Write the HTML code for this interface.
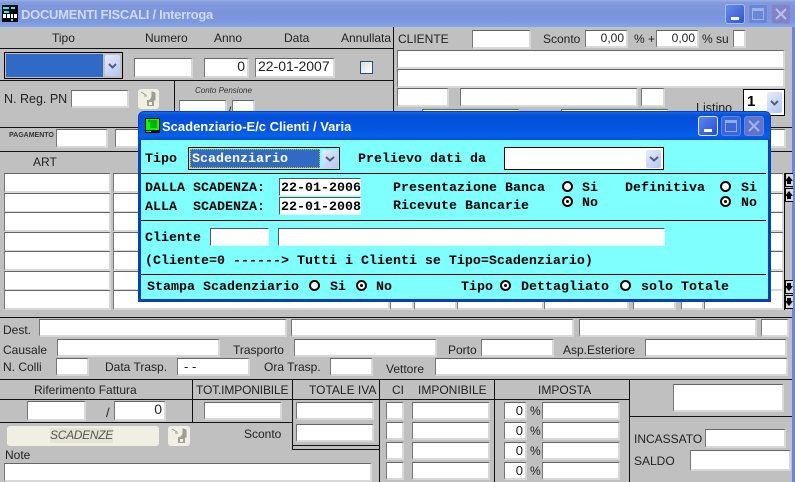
<!DOCTYPE html>
<html><head><meta charset="utf-8">
<style>
html,body{margin:0;padding:0;background:#c0c0c0}
#p{position:relative;width:795px;height:482px;overflow:hidden;background:#c0c0c0;font-family:"Liberation Sans",Arial,sans-serif;font-size:12px;color:#222}
#p div,#p span.a{position:absolute;box-sizing:border-box}
.t{white-space:nowrap;line-height:14px;height:14px}
.c{text-align:center}
.i{background:#fff;border:1px solid #c9c9c9;border-top:1px solid #666;border-left:1px solid #777;border-right:2px solid #d8d8d8;border-bottom:2px solid #d8d8d8;text-align:right;line-height:15px;padding-right:2px;font-size:13px;overflow:hidden;white-space:nowrap}
.k{background:#111}
.btn{background:linear-gradient(135deg,#e6ecfb,#b4c5f0);border-radius:2px}
.btn svg{position:absolute;left:3px;top:8px}
.x{background:#f1efe2;border-radius:3px}
#d{left:138px;top:111px;width:633px;height:191px;background:#0a3fb8;border-radius:6px 6px 0 0}
#d .tt{left:1px;top:1px;width:631px;height:28px;border-radius:5px 5px 0 0;background:linear-gradient(#0f6cf0 0,#0450d6 12%,#0454e0 55%,#0560ea 85%,#0a4fd0 100%)}
#d .b{left:3px;top:29px;width:627px;height:159px;background:#80ffff}
.m{font-family:"Liberation Mono",monospace;font-weight:bold;font-size:13.33px;color:#000;white-space:pre;line-height:14px;height:14px}
.r{width:11px;height:11px;border:2px solid #000;border-radius:50%;background:#fff}
.r.o::after{content:"";position:absolute;left:2px;top:2px;width:3px;height:3px;background:#000;border-radius:50%}
.wb{width:20px;height:20px;border-radius:3px;border:1px solid #fff}
.wb svg{position:absolute;left:2px;top:2px}
.sb{left:785px;width:8px;height:14px;background:#d8d8d8;border:1px solid #000;border-right:0}
.sb svg{position:absolute;left:-1px;top:1px}
</style></head><body><div id="p">

<!-- main title bar -->
<div style="left:0;top:0;width:795px;height:27px;background:linear-gradient(#9db0e6 0,#8299dd 10%,#7a94da 50%,#7c98df 80%,#88a8ea 100%)"></div>
<svg style="position:absolute;left:2px;top:5px" width="16" height="17" viewBox="0 0 16 17"><rect width="16" height="17" fill="#000"/><rect x="1" y="2" width="6" height="2" fill="#0ff"/><rect x="9" y="2" width="4" height="2" fill="#0ff"/><rect x="2" y="6" width="5" height="2" fill="#0ff"/><rect x="1" y="9" width="3" height="4" fill="#fff"/><rect x="5" y="9" width="3" height="4" fill="#fff"/><rect x="9" y="9" width="2" height="4" fill="#fff"/><rect x="12" y="9" width="3" height="4" fill="#fff"/><rect x="9" y="14" width="2" height="2" fill="#0ff"/></svg>
<div class="t" style="left:21px;top:8px;font-size:13px;font-weight:bold;color:#cfdaf5;letter-spacing:-.28px">DOCUMENTI FISCALI / Interroga</div>
<div class="wb" style="left:725px;top:4px;background:linear-gradient(135deg,#6a8ce8,#2f56d0);border-color:#a8bdf2"><div style="left:5px;top:12px;width:8px;height:3px;background:#fff"></div></div>
<div class="wb" style="left:748px;top:4px;background:#6b85d8;border-color:#829be2"><div style="left:3px;top:3px;width:12px;height:12px;border:1px solid #a0b3e8;border-top-width:3px"></div></div>
<div class="wb" style="left:771px;top:4px;background:#8083c8;border-color:#8a8fd4"><svg width="14" height="14" viewBox="0 0 14 14"><path d="M2 2 12 12M12 2 2 12" stroke="#b8c2ea" stroke-width="2" fill="none"/></svg></div>
<div style="left:792px;top:27px;width:3px;height:455px;background:#6f83da"></div>

<!-- header labels -->
<div class="t" style="left:52px;top:31px;font-size:12px">Tipo</div>
<div class="t" style="left:145px;top:31px">Numero</div>
<div class="t" style="left:214px;top:31px">Anno</div>
<div class="t" style="left:284px;top:31px">Data</div>
<div class="t" style="left:341px;top:31px">Annullata</div>
<div class="k" style="left:0;top:48px;width:394px;height:1px"></div>
<div class="k" style="left:0;top:80px;width:394px;height:1px"></div>
<div class="k" style="left:393px;top:27px;width:1px;height:85px"></div>
<div class="k" style="left:174px;top:80px;width:1px;height:47px"></div>
<div class="k" style="left:0;top:127px;width:140px;height:1px"></div>
<div class="k" style="left:0;top:151px;width:140px;height:1px"></div>

<div style="left:4px;top:52px;width:119px;height:27px;border:1px solid #000;background:#c0c0c0"></div>
<div style="left:6px;top:54px;width:97px;height:23px;background:#316ac5"></div>
<div class="btn" style="left:105px;top:55px;width:15px;height:21px"><svg width="9" height="6" viewBox="0 0 9 6"><path d="M1 1 4.500 4.500 8 1" fill="none" stroke="#4d6185" stroke-width="2"/></svg></div>
<div class="i" style="left:134px;top:58px;width:59px;height:20px"></div>
<div class="i" style="left:204px;top:58px;width:45px;height:20px;font-size:14px">0</div>
<div class="i" style="left:255px;top:58px;width:80px;height:20px;font-size:14px;text-align:left;padding-left:2px">22-01-2007</div>
<div style="left:360px;top:61px;width:13px;height:13px;border:1px solid #1c5180;background:linear-gradient(135deg,#dcdcd7,#fff)"></div>

<div class="t" style="left:4px;top:92px;font-size:12.500px">N. Reg. PN</div>
<div class="i" style="left:71px;top:90px;width:58px;height:18px"></div>
<div class="x" style="left:138px;top:89px;width:21px;height:20px"><svg style="position:absolute;left:1px;top:1px" width="19" height="18" viewBox="0 0 19 18"><path d="M2 2 7 5M5 6h3M13 2v5l-2 3h5V3z" stroke="#999" fill="#a0a094" stroke-width="1"/><rect x="8" y="10" width="7" height="6" fill="#a0a094"/><rect x="10" y="12" width="3" height="3" fill="#f1efe2"/></svg></div>
<div class="t" style="left:195px;top:84px;font-size:8px;font-style:italic;color:#333">Conto Pensione</div>
<div class="i" style="left:179px;top:100px;width:48px;height:20px"></div>
<div class="t" style="left:228px;top:104px">/</div>
<div class="i" style="left:232px;top:100px;width:23px;height:20px"></div>
<div class="t" style="left:9px;top:129px;font-size:7px;font-weight:bold;color:#333">PAGAMENTO</div>
<div class="i" style="left:56px;top:129px;width:52px;height:19px"></div>
<div class="i" style="left:115px;top:129px;width:40px;height:19px"></div>

<!-- right header -->
<div class="t" style="left:398px;top:32px;font-size:12px">CLIENTE</div>
<div class="i" style="left:472px;top:30px;width:59px;height:19px"></div>
<div class="t" style="left:543px;top:32px">Sconto</div>
<div class="i" style="left:585px;top:30px;width:43px;height:18px;font-size:12px">0,00</div>
<div class="t" style="left:634px;top:32px">% +</div>
<div class="i" style="left:656px;top:30px;width:43px;height:18px;font-size:12px">0,00</div>
<div class="t" style="left:702px;top:32px">% su</div>
<div class="i" style="left:733px;top:30px;width:13px;height:18px"></div>
<div class="i" style="left:397px;top:50px;width:388px;height:19px"></div>
<div class="i" style="left:397px;top:69px;width:388px;height:19px"></div>
<div class="i" style="left:397px;top:88px;width:52px;height:19px"></div>
<div class="i" style="left:460px;top:88px;width:178px;height:19px"></div>
<div class="i" style="left:641px;top:88px;width:24px;height:19px"></div>
<div class="i" style="left:422px;top:109px;width:98px;height:10px"></div>
<div class="i" style="left:561px;top:109px;width:108px;height:10px"></div>
<div class="t" style="left:696px;top:101px;font-size:12.500px">Listino</div>
<div style="left:743px;top:89px;width:42px;height:27px;border:1px solid #000;background:#fff"></div>
<div class="t" style="left:747px;top:95px;font-size:15px;font-weight:bold;color:#000">1</div>
<div class="btn" style="left:767px;top:92px;width:15px;height:21px"><svg width="9" height="6" viewBox="0 0 9 6"><path d="M1 1 4.500 4.500 8 1" fill="none" stroke="#4d6185" stroke-width="2"/></svg></div>
<div class="k" style="left:770px;top:127px;width:22px;height:1px"></div>
<div class="i" style="left:770px;top:129px;width:16px;height:19px"></div>
<div class="k" style="left:770px;top:151px;width:22px;height:1px"></div>

<!-- table -->
<div class="t" style="left:33px;top:155px">ART</div>
<div class="i" style="left:4px;top:173px;width:107px;height:20px"></div>
<div class="i" style="left:4px;top:193px;width:107px;height:20px"></div>
<div class="i" style="left:4px;top:212px;width:107px;height:20px"></div>
<div class="i" style="left:4px;top:232px;width:107px;height:20px"></div>
<div class="i" style="left:4px;top:251px;width:107px;height:20px"></div>
<div class="i" style="left:4px;top:271px;width:107px;height:20px"></div>
<div class="i" style="left:4px;top:290px;width:107px;height:20px"></div>
<div class="i" style="left:113px;top:173px;width:30px;height:20px"></div>
<div class="i" style="left:113px;top:193px;width:30px;height:20px"></div>
<div class="i" style="left:113px;top:212px;width:30px;height:20px"></div>
<div class="i" style="left:113px;top:232px;width:30px;height:20px"></div>
<div class="i" style="left:113px;top:251px;width:30px;height:20px"></div>
<div class="i" style="left:113px;top:271px;width:30px;height:20px"></div>
<div class="i" style="left:113px;top:290px;width:277px;height:20px"></div>
<div class="i" style="left:390px;top:290px;width:24px;height:20px"></div>
<div class="i" style="left:414px;top:290px;width:43px;height:20px"></div>
<div class="i" style="left:457px;top:290px;width:87px;height:20px"></div>
<div class="i" style="left:544px;top:290px;width:85px;height:20px"></div>
<div class="i" style="left:633px;top:290px;width:43px;height:20px"></div>
<div class="i" style="left:681px;top:290px;width:23px;height:20px"></div>
<div class="i" style="left:704px;top:290px;width:80px;height:20px"></div>
<div class="i" style="left:768px;top:173px;width:16px;height:20px"></div>
<div class="i" style="left:768px;top:193px;width:16px;height:20px"></div>
<div class="i" style="left:768px;top:212px;width:16px;height:20px"></div>
<div class="i" style="left:768px;top:232px;width:16px;height:20px"></div>
<div class="i" style="left:768px;top:251px;width:16px;height:20px"></div>
<div class="i" style="left:768px;top:271px;width:16px;height:20px"></div>
<!-- scroll -->
<div class="k" style="left:784px;top:173px;width:1px;height:137px"></div>
<div class="sb" style="top:173px"><svg width="8" height="10" viewBox="0 0 8 10"><path d="M0 6 4 1 8 6H6V9H2V6z" fill="#000"/></svg></div>
<div class="sb" style="top:188px"><svg width="8" height="10" viewBox="0 0 8 10"><path d="M0 6 4 1 8 6H6V9H2V6z" fill="#000"/></svg></div>
<div class="sb" style="top:280px"><svg width="8" height="10" viewBox="0 0 8 10"><path d="M0 4 4 9 8 4H6V1H2V4z" fill="#000"/></svg></div>
<div class="sb" style="top:295px"><svg width="8" height="10" viewBox="0 0 8 10"><path d="M0 4 4 9 8 4H6V1H2V4z" fill="#000"/></svg></div>

<!-- lower form -->
<div class="k" style="left:0;top:317px;width:792px;height:1px"></div>
<div class="t" style="left:3px;top:323px">Dest.</div>
<div class="i" style="left:39px;top:319px;width:248px;height:18px"></div>
<div class="i" style="left:291px;top:319px;width:283px;height:18px"></div>
<div class="i" style="left:579px;top:319px;width:178px;height:18px"></div>
<div class="i" style="left:761px;top:319px;width:28px;height:18px"></div>
<div class="t" style="left:3px;top:343px">Causale</div>
<div class="i" style="left:57px;top:339px;width:163px;height:18px"></div>
<div class="t" style="left:233px;top:343px">Trasporto</div>
<div class="i" style="left:294px;top:339px;width:143px;height:18px"></div>
<div class="t" style="left:448px;top:343px">Porto</div>
<div class="i" style="left:481px;top:339px;width:73px;height:18px"></div>
<div class="t" style="left:563px;top:343px">Asp.Esteriore</div>
<div class="i" style="left:645px;top:339px;width:142px;height:18px"></div>
<div class="t" style="left:3px;top:360px">N. Colli</div>
<div class="i" style="left:56px;top:358px;width:33px;height:18px"></div>
<div class="t" style="left:105px;top:360px">Data Trasp.</div>
<div class="i" style="left:177px;top:358px;width:73px;height:18px;text-align:left;padding-left:6px">- -</div>
<div class="t" style="left:264px;top:360px">Ora Trasp.</div>
<div class="i" style="left:330px;top:358px;width:43px;height:18px"></div>
<div class="t" style="left:386px;top:362px">Vettore</div>
<div class="i" style="left:435px;top:358px;width:353px;height:18px"></div>

<div class="k" style="left:0;top:379px;width:792px;height:1px"></div>
<div class="k" style="left:0;top:399px;width:629px;height:1px"></div>
<div class="k" style="left:192px;top:379px;width:1px;height:43px"></div>
<div class="k" style="left:292px;top:379px;width:1px;height:70px"></div>
<div class="k" style="left:379px;top:379px;width:1px;height:103px"></div>
<div class="k" style="left:494px;top:379px;width:1px;height:103px"></div>
<div class="k" style="left:629px;top:379px;width:1px;height:103px"></div>
<div class="k" style="left:0;top:422px;width:292px;height:1px"></div>
<div class="k" style="left:292px;top:445px;width:87px;height:1px"></div>
<div class="k" style="left:292px;top:449px;width:87px;height:1px"></div>
<div class="k" style="left:629px;top:416px;width:163px;height:1px"></div>

<div class="t" style="left:34px;top:383px">Riferimento Fattura</div>
<div class="t" style="left:196px;top:383px;letter-spacing:-.15px">TOT.IMPONIBILE</div>
<div class="t" style="left:309px;top:383px">TOTALE IVA</div>
<div class="t" style="left:392px;top:383px">CI</div>
<div class="t" style="left:418px;top:383px">IMPONIBILE</div>
<div class="t" style="left:538px;top:383px">IMPOSTA</div>

<div class="i" style="left:27px;top:401px;width:59px;height:20px"></div>
<div class="t" style="left:106px;top:406px;font-size:13px">/</div>
<div class="i" style="left:114px;top:401px;width:52px;height:20px;font-size:14px">0</div>
<div class="i" style="left:204px;top:402px;width:78px;height:18px"></div>
<div class="i" style="left:296px;top:402px;width:78px;height:18px"></div>
<div class="i" style="left:296px;top:424px;width:78px;height:18px"></div>

<div class="i" style="left:386px;top:402px;width:18px;height:18px"></div>
<div class="i" style="left:386px;top:422px;width:18px;height:18px"></div>
<div class="i" style="left:386px;top:442px;width:18px;height:18px"></div>
<div class="i" style="left:386px;top:462px;width:18px;height:18px"></div>
<div class="i" style="left:412px;top:402px;width:78px;height:18px"></div>
<div class="i" style="left:412px;top:422px;width:78px;height:18px"></div>
<div class="i" style="left:412px;top:442px;width:78px;height:18px"></div>
<div class="i" style="left:412px;top:462px;width:78px;height:18px"></div>
<div class="i" style="left:504px;top:402px;width:23px;height:18px">0</div>
<div class="i" style="left:504px;top:422px;width:23px;height:18px">0</div>
<div class="i" style="left:504px;top:442px;width:23px;height:18px">0</div>
<div class="i" style="left:504px;top:462px;width:23px;height:18px">0</div>
<div class="t" style="left:530px;top:404px">%</div>
<div class="t" style="left:530px;top:424px">%</div>
<div class="t" style="left:530px;top:444px">%</div>
<div class="t" style="left:530px;top:464px">%</div>
<div class="i" style="left:542px;top:402px;width:78px;height:18px"></div>
<div class="i" style="left:542px;top:422px;width:78px;height:18px"></div>
<div class="i" style="left:542px;top:442px;width:78px;height:18px"></div>
<div class="i" style="left:542px;top:462px;width:78px;height:18px"></div>

<div class="i" style="left:673px;top:384px;width:111px;height:28px"></div>
<div class="t" style="left:634px;top:432px">INCASSATO</div>
<div class="i" style="left:705px;top:429px;width:81px;height:19px"></div>
<div class="t" style="left:634px;top:454px">SALDO</div>
<div class="i" style="left:690px;top:450px;width:101px;height:21px"></div>

<div class="x" style="left:7px;top:426px;width:152px;height:20px"></div>
<div class="t" style="left:50px;top:428px;height:15px;font-size:12px;font-style:italic;color:#555;background:#e6e4d4;letter-spacing:-.3px">SCADENZE</div>
<div class="x" style="left:168px;top:426px;width:22px;height:20px"><svg style="position:absolute;left:2px;top:1px" width="19" height="18" viewBox="0 0 19 18"><path d="M2 2 7 5M5 6h3M13 2v5l-2 3h5V3z" stroke="#999" fill="#a0a094" stroke-width="1"/><rect x="8" y="10" width="7" height="6" fill="#a0a094"/><rect x="10" y="12" width="3" height="3" fill="#f1efe2"/></svg></div>
<div class="t" style="left:244px;top:427px">Sconto</div>
<div class="t" style="left:5px;top:448px">Note</div>
<div class="i" style="left:4px;top:463px;width:368px;height:19px"></div>

<!-- dialog -->
<div id="d">
 <div class="tt"></div>
 <div class="b"></div>
 <svg style="position:absolute;left:7px;top:7px" width="15" height="15" viewBox="0 0 15 15"><rect width="15" height="15" fill="#000"/><rect x="1" y="1" width="13" height="11" fill="#0f0"/><path d="M3 3h9M5 5h7M5 7h7M5 9h7" stroke="#060" stroke-width="1"/><rect x="1" y="13" width="5" height="1" fill="#0f0"/></svg>
 <div class="t" style="left:24px;top:9px;font-size:13px;font-weight:bold;color:#fff">Scadenziario-E/c Clienti / Varia</div>
 <div class="wb" style="left:560px;top:5px;background:linear-gradient(135deg,#5b86ee,#2450d8);border-color:#dfe8ff"><div style="left:5px;top:12px;width:8px;height:3px;background:#fff"></div></div>
 <div class="wb" style="left:583px;top:5px;background:#3a66dc;border-color:#5f86e6"><div style="left:3px;top:3px;width:12px;height:12px;border:1px solid #8fb0f0;border-top-width:3px"></div></div>
 <div class="wb" style="left:606px;top:5px;background:#5f72cc;border-color:#6f85d8"><svg width="14" height="14" viewBox="0 0 14 14"><path d="M2 2 12 12M12 2 2 12" stroke="#a5b4e6" stroke-width="2" fill="none"/></svg></div>
</div>

<!-- dialog contents (absolute page coords) -->
<div class="m" style="left:145px;top:153px">Tipo</div>
<div style="left:188px;top:147px;width:152px;height:23px;border:1px solid #000;background:#80ffff"></div>
<div style="left:190px;top:149px;width:130px;height:19px;background:#316ac5;outline:1px dotted #e6b800;outline-offset:-1px"></div>
<div class="m" style="left:192px;top:153px;color:#fff">Scadenziario</div>
<div class="btn" style="left:322px;top:150px;width:16px;height:18px"><svg style="left:3px;top:6px" width="10" height="6" viewBox="0 0 10 6"><path d="M1 1 5 4.500 9 1" fill="none" stroke="#4d6185" stroke-width="2"/></svg></div>
<div class="m" style="left:358px;top:153px">Prelievo dati da</div>
<div style="left:504px;top:147px;width:160px;height:23px;border:1px solid #000;background:#fff"></div>
<div class="btn" style="left:646px;top:150px;width:15px;height:18px"><svg style="left:3px;top:6px" width="10" height="6" viewBox="0 0 10 6"><path d="M1 1 5 4.500 9 1" fill="none" stroke="#4d6185" stroke-width="2"/></svg></div>

<div class="k" style="left:141px;top:173px;width:625px;height:1px;background:#000"></div>
<div class="m" style="left:145px;top:182px">DALLA SCADENZA:</div>
<div class="m" style="left:145px;top:201px">ALLA  SCADENZA:</div>
<div style="left:279px;top:178px;width:82px;height:18px;background:#fff;border:1px solid #555;border-right-color:#dff;border-bottom-color:#dff"></div>
<div style="left:279px;top:197px;width:82px;height:18px;background:#fff;border:1px solid #555;border-right-color:#dff;border-bottom-color:#dff"></div>
<div class="m" style="left:281px;top:182px">22-01-2006</div>
<div class="m" style="left:281px;top:201px">22-01-2008</div>
<div class="m" style="left:393px;top:182px">Presentazione Banca</div>
<div class="m" style="left:393px;top:200px">Ricevute Bancarie</div>
<div class="r" style="left:562px;top:181px"></div>
<div class="m" style="left:582px;top:182px">Si</div>
<div class="r o" style="left:562px;top:196px"></div>
<div class="m" style="left:582px;top:197px">No</div>
<div class="m" style="left:625px;top:182px">Definitiva</div>
<div class="r" style="left:720px;top:181px"></div>
<div class="m" style="left:741px;top:182px">Si</div>
<div class="r o" style="left:720px;top:196px"></div>
<div class="m" style="left:741px;top:197px">No</div>

<div class="k" style="left:141px;top:220px;width:625px;height:1px;background:#000"></div>
<div class="m" style="left:145px;top:232px">Cliente</div>
<div style="left:210px;top:228px;width:59px;height:18px;background:#fff;border:1px solid #555;border-right-color:#dff;border-bottom-color:#dff"></div>
<div style="left:278px;top:228px;width:387px;height:18px;background:#fff;border:1px solid #555;border-right-color:#dff;border-bottom-color:#dff"></div>
<div class="m" style="left:145px;top:255px">(Cliente=0 ------&gt; Tutti i Clienti se Tipo=Scadenziario)</div>

<div class="k" style="left:141px;top:274px;width:625px;height:1px;background:#000"></div>
<div class="m" style="left:147px;top:281px">Stampa Scadenziario</div>
<div class="r" style="left:309px;top:280px"></div>
<div class="m" style="left:330px;top:281px">Si</div>
<div class="r o" style="left:356px;top:280px"></div>
<div class="m" style="left:376px;top:281px">No</div>
<div class="m" style="left:461px;top:281px">Tipo</div>
<div class="r o" style="left:500px;top:280px"></div>
<div class="m" style="left:521px;top:281px">Dettagliato</div>
<div class="r" style="left:620px;top:280px"></div>
<div class="m" style="left:641px;top:281px">solo Totale</div>

</div></body></html>
